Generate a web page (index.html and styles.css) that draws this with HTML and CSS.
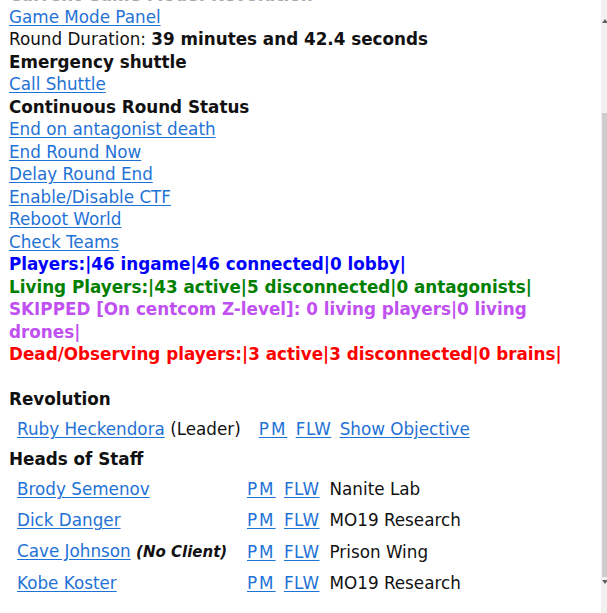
FILE: index.html
```html
<!DOCTYPE html>
<html>
<head>
<meta charset="utf-8">
<link rel="stylesheet" href="styles.css">
</head>
<body>
<div class="page">
  <div class="line cut"><b>Current Game Mode: Revolution</b></div>
  <div class="line"><a href="#">Game Mode Panel</a></div>
  <div class="line">Round Duration: <b>39 minutes and 42.4 seconds</b></div>
  <div class="line"><b>Emergency shuttle</b></div>
  <div class="line"><a href="#">Call Shuttle</a></div>
  <div class="line"><b>Continuous Round Status</b></div>
  <div class="line"><a href="#">End on antagonist death</a></div>
  <div class="line"><a href="#">End Round Now</a></div>
  <div class="line"><a href="#">Delay Round End</a></div>
  <div class="line"><a href="#">Enable/Disable CTF</a></div>
  <div class="line"><a href="#">Reboot World</a></div>
  <div class="line"><a href="#">Check Teams</a></div>
  <div class="line blue"><b>Players:|46 ingame|46 connected|0 lobby|</b></div>
  <div class="line green"><b>Living Players:|43 active|5 disconnected|0 antagonists|</b></div>
  <div class="line purple"><b>SKIPPED [On centcom Z-level]: 0 living players|0 living drones|</b></div>
  <div class="line red"><b>Dead/Observing players:|3 active|3 disconnected|0 brains|</b></div>

  <div class="section">
    <div class="head">Revolution</div>
    <table class="tbl">
      <tr><td><a href="#">Ruby Heckendora</a> (Leader)</td><td class="acts lead"><a href="#" class="pm">PM</a> <a href="#" class="flw">FLW</a> <a href="#">Show Objective</a></td></tr>
    </table>
    <div class="head">Heads of Staff</div>
    <table class="tbl staff">
      <tr><td class="name"><a href="#">Brody Semenov</a></td><td class="acts"><a href="#" class="pm">PM</a> <a href="#" class="flw">FLW</a></td><td>Nanite Lab</td></tr>
      <tr><td class="name"><a href="#">Dick Danger</a></td><td class="acts"><a href="#" class="pm">PM</a> <a href="#" class="flw">FLW</a></td><td>MO19 Research</td></tr>
      <tr><td class="name"><a href="#">Cave Johnson</a> <i class="nc">(No Client)</i></td><td class="acts"><a href="#" class="pm">PM</a> <a href="#" class="flw">FLW</a></td><td>Prison Wing</td></tr>
      <tr><td class="name"><a href="#">Kobe Koster</a></td><td class="acts"><a href="#" class="pm">PM</a> <a href="#" class="flw">FLW</a></td><td>MO19 Research</td></tr>
    </table>
  </div>
</div>
<div class="scrollbar">
  <div class="arrow up"></div>
  <div class="thumb"></div>
  <div class="arrow down"></div>
</div>
</body>
</html>
```
FILE: styles.css
```css
html, body {
  margin: 0;
  padding: 0;
  background: #ffffff;
}
body {
  font-family: "DejaVu Sans", "Noto Sans CJK JP", sans-serif;
  font-size: 16.8px;
  color: #111111;
  overflow: hidden;
}
.page {
  padding: 0 8px 0 9px;
}
.line {
  line-height: 22.5px;
  max-width: 560px;
}
.cut {
  color: #a8a8a8;
  margin-top: -16.5px;
  margin-bottom: -0.5px;
}
a {
  color: #1f72d6;
  text-decoration: underline;
  text-underline-offset: 2px;
}
b { font-weight: bold; }
.blue { color: #0000ff; }
.green { color: #008000; }
.purple { color: #c050f0; }
.red { color: #ff0000; }
.section { margin-top: 20.5px; }
.head {
  font-weight: bold;
  line-height: 27px;
}
.tbl {
  border-collapse: separate;
  border-spacing: 2px;
}
.tbl td {
  padding: 3px 4px 3px 6px;
  line-height: 23px;
  white-space: nowrap;
  vertical-align: middle;
}
.tbl td.acts {
  padding-left: 2px;
  padding-right: 2px;
  word-spacing: 3px;
}
.tbl td.acts a { word-spacing: normal; }
.tbl td.lead { padding-left: 12px; }
.pm { letter-spacing: 2px; }
.flw { letter-spacing: 0.5px; }
.staff .name { width: 222px; }
.nc { font-weight: bold; font-size: 15px; }
.scrollbar {
  position: fixed;
  top: 0;
  right: 0;
  width: 6px;
  height: 613px;
  background: #f0f0f0;
}
.thumb {
  position: absolute;
  left: 1px;
  right: 0;
  top: 113px;
  height: 464px;
  background: #cdcdcd;
}
.arrow {
  position: absolute;
  left: 1px;
  width: 0;
  height: 0;
  border-left: 3px solid transparent;
  border-right: 3px solid transparent;
}
.arrow.up { top: 19px; border-bottom: 4px solid #606060; }
.arrow.down { top: 580px; border-top: 4px solid #606060; }
```
